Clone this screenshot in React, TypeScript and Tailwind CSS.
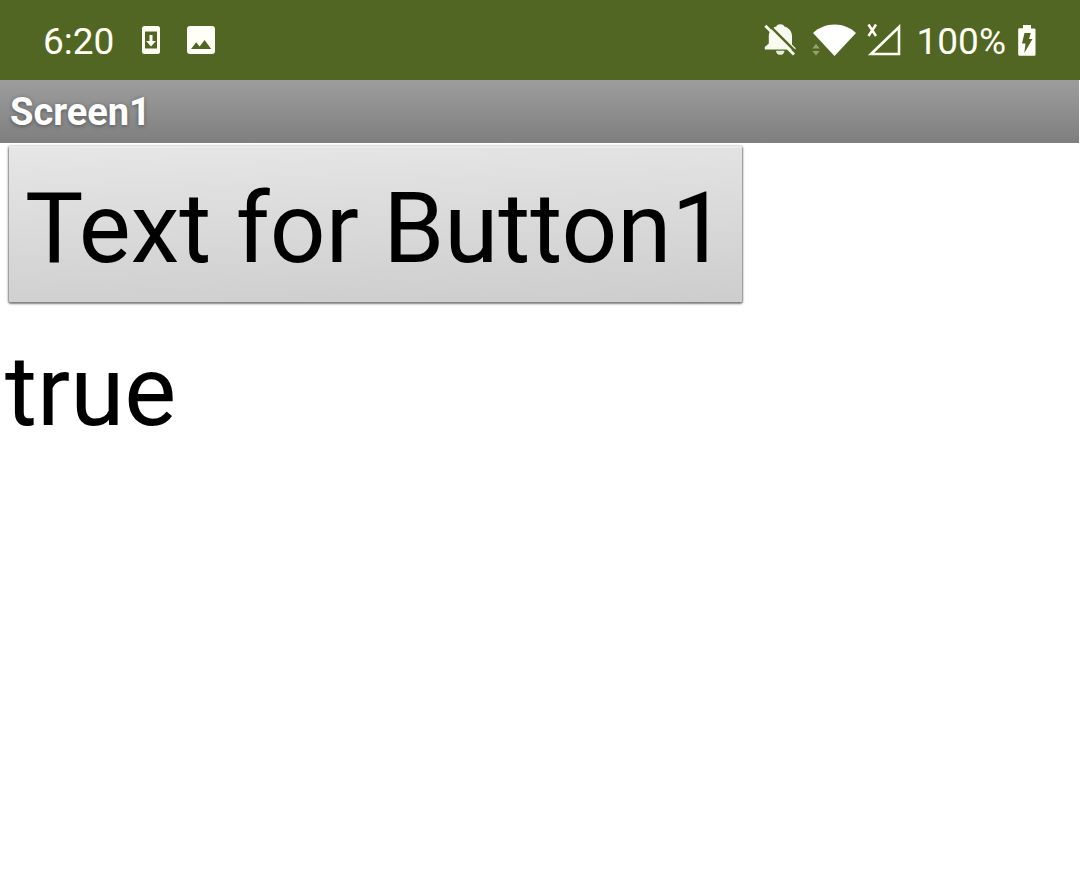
import React from "react";

function DownloadPhoneIcon() {
  return (
    <svg width="18" height="28" viewBox="0 0 18 28" fill="#fffff4" aria-hidden="true">
      <path
        fillRule="evenodd"
        d="M2.500 0h13A2.500 2.500 0 0 1 18 2.500v23A2.500 2.500 0 0 1 15.500 28h-13A2.500 2.500 0 0 1 0 25.500v-23A2.500 2.500 0 0 1 2.500 0zM3 5.500v17h12v-17z"
      />
      <path d="M7.500 9h3v6h3.400L9 20.500 4.100 15h3.400z" />
    </svg>
  );
}

function PictureIcon() {
  return (
    <svg width="28" height="28" viewBox="0 0 28 28" aria-hidden="true">
      <rect width="28" height="28" rx="3" fill="#fffff8" />
      <path d="M4 23l5.200-6.700 3.400 4.200L17.600 14 24.200 23z" fill="#526623" />
    </svg>
  );
}

function BellOffIcon() {
  return (
    <svg width="32" height="32" viewBox="0 0 32 32" aria-hidden="true">
      <path
        d="M16.300.3c2.200 0 3.500.8 4 2.100 4.900 1.300 7.700 5 7.700 9.900v8.200l3.500 3.500v1.500H.8v-2.500l4-3.500v-7c0-5 2.700-8.800 7.600-10.100C12.900 1.100 14.200.3 16.300.3z"
        fill="#f8faf0"
      />
      <path d="M12 26.800h8.500a4.200 4 0 0 1-8.500 0z" fill="#e6ebd6" />
      <path d="M3-1L34 30" stroke="#526623" strokeWidth="2.400" />
      <path d="M1.300 1.700L30 30.400" stroke="#f8faf0" strokeWidth="2.800" />
    </svg>
  );
}

function WifiIcon() {
  return (
    <svg width="44" height="34" viewBox="0 0 44 34" aria-hidden="true">
      <path d="M1 10C7 4.500 14 1.500 22.500 1.500S38 4.500 44 10L22.500 33z" fill="#fff" />
      <path d="M.3 25.500L4 20.800l3.700 4.700zM.3 28h7.400L4 32.500z" fill="#93a26f" />
    </svg>
  );
}

function NoSignalIcon() {
  return (
    <svg width="34" height="32" viewBox="0 0 34 32" fill="none" stroke="#fffff4" aria-hidden="true">
      <path d="M32 3V30H4z" strokeWidth="2.600" />
      <path d="M1.500.5l7.500 11.500M9 .5l-7.500 11.500" strokeWidth="2.500" />
    </svg>
  );
}

function BatteryIcon() {
  return (
    <svg width="18" height="32" viewBox="0 0 18 32" aria-hidden="true">
      <path
        d="M5 1h8v3.500h3.500A1.200 1.200 0 0 1 17.500 5.500v25a1.200 1.200 0 0 1-1.200 1.200h-15A1.200 1.200 0 0 1 .2 30.500v-25a1.200 1.200 0 0 1 1.200-1.200H5z"
        fill="#fffff8"
      />
      <path d="M6.500 9h6.300L11 15h3.500L6.300 29l1.200-9.500H4z" fill="#526623" />
    </svg>
  );
}

function StatusBar() {
  return (
    <header className="flex h-20 items-center justify-between bg-[#526623] pl-[43px] pr-11 text-[37px] leading-10 text-[#fffff4]">
      <div className="flex items-center">
        <time className="pt-1">6:20</time>
        <div className="ml-7 flex items-center gap-[27px]">
          <DownloadPhoneIcon />
          <PictureIcon />
        </div>
      </div>
      <div className="flex items-center">
        <div className="flex items-center gap-4">
          <BellOffIcon />
          <WifiIcon />
        </div>
        <div className="ml-[11px]">
          <NoSignalIcon />
        </div>
        <span className="ml-4 pt-1">100%</span>
        <div className="ml-3">
          <BatteryIcon />
        </div>
      </div>
    </header>
  );
}

export default function App() {
  return (
    <div className="min-h-screen bg-white font-['Roboto',sans-serif] text-black">
      <StatusBar />
      <div className="mr-px bg-linear-to-b from-[#9d9d9d] to-[#7f7f7f] px-[10px] pb-[9px] pt-[10px]">
        <h1 className="text-[38px] font-bold leading-[44px] text-white [text-shadow:0_1px_4px_rgba(0,0,0,0.4)]">
          Screen1
        </h1>
      </div>
      <main className="flex flex-col items-start pt-[3px]">
        <button
          type="button"
          className="ml-[9px] rounded-xs border-t-2 border-[#ebebeb] bg-[linear-gradient(178deg,#e6e6e6,#cdcdcd)] pb-[17px] pl-4 pr-[15px] pt-[25px] text-[98px] leading-[112px] shadow-[0_1px_2px_1px_rgba(0,0,0,0.5)]"
        >
          Text for Button1
        </button>
        <p className="ml-[5px] mt-8 text-[98px] leading-[116px]">true</p>
      </main>
    </div>
  );
}
